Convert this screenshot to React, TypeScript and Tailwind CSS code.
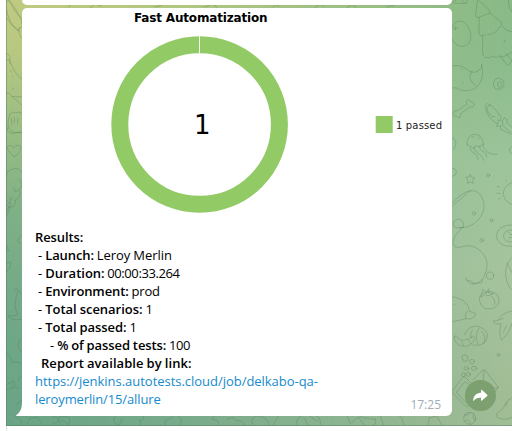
import React from "react";

const lines: { indent: string; label: string; value?: string; labelClass?: string; valueClass?: string }[] = [
  { indent: "", label: "Results:", labelClass: "tracking-[-0.12px]" },
  { indent: " - ", label: "Launch:", value: "Leroy Merlin", labelClass: "tracking-[-0.1px]", valueClass: "tracking-[-0.05px]" },
  { indent: " - ", label: "Duration:", value: "00:00:33.264", valueClass: "tracking-[-0.4px]" },
  { indent: " - ", label: "Environment:", value: "prod", labelClass: "tracking-[-0.1px]", valueClass: "tracking-[-0.2px]" },
  { indent: " - ", label: "Total scenarios:", value: "1", labelClass: "tracking-[-0.02px]" },
  { indent: " - ", label: "Total passed:", value: "1", labelClass: "tracking-[-0.06px]" },
  { indent: "     - ", label: "% of passed tests:", value: "100", labelClass: "tracking-[-0.09px]", valueClass: "tracking-[-0.4px]" },
  { indent: "  ", label: "Report available by link:", labelClass: "tracking-[0.06px]" },
];

function Wallpaper() {
  return (
    <svg className="absolute inset-0" width="506" height="426" viewBox="6 0 506 426" aria-hidden="true">
      <defs>
        <linearGradient id="left" x1="0" y1="0" x2="0" y2="1">
          <stop offset="0" stopColor="#c1cb80" />
          <stop offset="0.12" stopColor="#b9c981" />
          <stop offset="0.3" stopColor="#9abd84" />
          <stop offset="0.5" stopColor="#80b087" />
          <stop offset="0.75" stopColor="#70a888" />
          <stop offset="1" stopColor="#69a486" />
        </linearGradient>
        <linearGradient id="right" x1="0" y1="0" x2="0.08" y2="1">
          <stop offset="0" stopColor="#86b883" />
          <stop offset="0.22" stopColor="#8bbb8c" />
          <stop offset="0.45" stopColor="#9dc49b" />
          <stop offset="0.7" stopColor="#a6c49e" />
          <stop offset="1" stopColor="#a1bd96" />
        </linearGradient>
        <linearGradient id="fade" x1="0" y1="0" x2="1" y2="0">
          <stop offset="0" stopColor="#000" />
          <stop offset="0.35" stopColor="#444" />
          <stop offset="0.88" stopColor="#ddd" />
          <stop offset="1" stopColor="#fff" />
        </linearGradient>
        <mask id="blend"><rect x="6" width="506" height="426" fill="url(#fade)" /></mask>
      </defs>
      <rect x="6" width="506" height="426" fill="url(#left)" />
      <rect x="6" width="506" height="426" fill="url(#right)" mask="url(#blend)" />
      <g fill="none" stroke="#527f5a" strokeOpacity="0.36" strokeWidth="2.8" strokeLinecap="round" strokeLinejoin="round">
        <g transform="translate(440 0) scale(.33333)">
          <path d="M38 8 55-5 82-3 79 11 42 9M66 0l8 9M113-2 107 42q0 12 10 10l31-12q4-3 0-9L116 0M118 52l-1 41q-2 14 9 13l10-1m8-1c18-2 28-10 34-23 7-3 11-9 6-14L148 38" />
          <path d="M127 107c5 19-6 58 8 65q16 4 25-4 9 9 20-1 8 8 17 0l19-11M181 169l19 25q6 4 9-2l7-11M197 160l19 22M187 79q14 17 29 16M195 122q-6-2-2 4M206-2q-4 20 10 38" />
          <path d="M36 83c7-22 28-27 43-10 24 32 13 67-13 66-16-1-26-10-30-25M39 88l7-8v10l8-9" />
          <path d="M36 198c28-6 39 7 55 17 14 8 38-9 34-22 9 37-4 61-19 71-20 13-46 8-56 0q-8-3-14 1M96 213c-13 18-4 35 12 44M67 250l3-1M63 207l3 1" />
          <path d="M192 260q-10 12-24 7-13-11-5-25 9-12 22-4 12 10 3 20-9 8-15-1-2-10 7-12 8 3 4 9M53 331l28-18c-7-14 8-18 11-8 14 2 14 15 2 16l-4-1-29 22c4 10-5 15-11 7-13 1-15-14-5-16q4 0 8-2" />
          <path d="M178 344c-18-27-44-45-41-22 2 21 17 40 34 49l13-17q-2-7-6-10ZM152 316c-10-1-15 11-7 21l10 12 10 1M174 369l-5 11 13-4-1 11 31 15M181 361l8 4-1 12 28 23M189 361l4-8 9 6-2 9 16 14M172 360l3 1" />
          <path d="M82 434c-4-40 41-38 45-12q8 12-3 15-7 8-15-1l-10 10-7-8q-9 3-10-4M95 411h7M113 414h3M91 443c2 22 21 11 23 36M104 440c-4 21 18 16 28 41M118 439c4 22 21 10 22 31M129 431c0 23 23 35 43 32M36 413q22 8 5 35M216 440q-16 9-1 21" />
        </g>
        <g transform="translate(440 140) scale(.33333)">
          <path d="M36 86q21 0 9 20l-9 3M91 104l5 9 9 1-7 7 2 9-9-4-9 4 1-10-6-8 10-1ZM36 190c37-42 70-49 88-21 19 30 3 75-40 91l-26 4M36 198l55-46" />
          <circle cx="102" cy="220" r="5" /><circle cx="145" cy="106" r="4" /><circle cx="154" cy="241" r="4" /><circle cx="125" cy="301" r="5" /><circle cx="150" cy="407" r="11" />
          <path d="M70 262C48 267 35 260 41 246c12-19 38-2 27 17C20 305 40 330 67 320c37-14 91 27 69 79-6 24-21 32-37 31-5-13-24-3-21-16M216 128c-33 9-36 53 0 65M171 139l8 3M171 160h9M176 178l5-5M197 121l2 3M216 255c-63-2-61 68 0 64M216 270c-35-2-33 39 0 36M205 276l6 8 5-1M206 294l10-2M216 352c-29 29-22 70-3 96M201 370l15 28" />
        </g>
        <g transform="translate(440 280) scale(.33333)">
          <path d="M80 0c11 18 31 12 35 9q16 2 11-10M138 38c-27-1-25 34-3 48 39 6 52-24 34-43q-13-14-31-5ZM129 29l10 7 8-10-1 13 14 2-13 6-13-3-12 8 4-14ZM155 49q15 14 7 26" />
          <path d="M36 50c31 6 48 17 53 45q10 0 18 6-5 20-28 15Q59 121 36 125M83 94q-12 7-5 21M42 74h2M216 93c-18 3-35 14-43 29l-14 1q4 12 24 8-8 29 1 49 21-14 32-50M177 120l14-5M190 157l9-20" />
          <path d="M43 171c1 33 45 37 58 12q9-11-3-15-10 12-29 13-21-4-15-9-8-9-11-1ZM74 164c14-37 55-30 68-2 2 27-20 37-43 33M97 150c-9 13-4 23 0 25M117 144c-11 16-8 38-3 48M125 154q18 20 5 37M64 184l7 13M86 180l7 11" />
          <ellipse cx="75" cy="234" rx="8" ry="10" transform="rotate(-30 75 234)" /><circle cx="96" cy="245" r="7" /><ellipse cx="79" cy="265" rx="7" ry="5" /><ellipse cx="102" cy="265" rx="8" ry="6" /><circle cx="85" cy="283" r="6" /><circle cx="70" cy="284" r="6" /><circle cx="175" cy="225" r="4" />
          <path d="M36 335 65 295q5-9 13-1l38 38-28 44q-6 8-14 0ZM50 336l22-28q4-4 8 0l27 26-23 32q-3 5-8 0ZM99 300l28-29q4-4 8-1l40 52-40 51q-5 5-10 0l-16-20M132 272l-3 37M175 322l-40 9" />
          <circle cx="89" cy="415" r="18" /><path d="M74 405q14 2 17-8M74 424q14-11 16 8M101 401q-6 13 5 22M216 354q-14 3-20 18-3 15-18 22-14 9-5 20 25 8 43-2M201 379q-9-9 1-11" />
        </g>
        <g transform="scale(.33333)">
          <path d="M19 5c12-13 26 22 43 49l6 25q-12 2-12 14-30-22-37-66M27 0q20 43 40 57M20 54q12 23 34 37M58 83q-6 20 9 34M19 163q12-6 11 20 13 39 36 55M20 180q10-8 9 11M31 211l3 5M37 227l2 1M19 280q10-4 15 8l32 27M36 290h30M38 264l2 5" />
          <path d="M29 344q7-12 17-5 9-5 19 0M29 344q-12 38 4 48 10 10 33 4M23 382q-5 20 19 18 15-8 24 0M34 356l2 18M44 353l-1 14M53 354v18M43 470C24 457 18 444 26 437q8-4 15 6 12-13 22-2 3 13-20 29ZM19 528q0-18 24-22 18-1 23 11M57 537q19 16 0 32 9 21-11 31 4 22-20 22M42 565l4 10 9-4M29 589l3 10 7-7M19 614q10 3 5 14l-5 9" />
        </g>
        <g transform="translate(0 200) scale(.33333)">
          <path d="M20 0q15 18 8 32l-8 17M30 0l2 12M19 138q9-3 3 7 10 9-3 7M19 192q5-10 12-5 4 17-12 28M65 104q-23 22-5 25M42 272q2-9 13-2l11 13M54 275q-17 39-1 68-12 9-30 3 8 17 42 12M66 412q-24 24 0 47M19 458q12 5 17 30 12-5 28 1M19 553l22-9 4 13-26 14M35 568q8-9 20-3M66 527q-14 7-10 18M48 615q9-15 18-11M42 646l24 19-1 25M75 690l13-35 24-4 16 24" />
        </g>
        <g transform="translate(0 410) scale(.33333)">
          <path d="M159 20q14-2 15 12-5 12-16 6M180 20h26q9 10 0 24-14 13-26-2-8-14 0-22M184 31l20 10M345 20q-9 12 2 21 15 10 19-15M420 46q5-10-2-15 15 3 12-13M497 47q-9-20 15-20 9-19 24-9 14 14 4 27M655 45q3-19-18-15 0-13 14-15M682 28q17-12 26 3 22-1 27 17M760 46q-13-19 8-28 31-3 40 28M834 19l-15 27M888 48q-2-36 42-36 39 5 30 36M912 22l14 28M926 16l26 18M1042 19l9 22 24-20 18 25M1080 20q29 9 47 7 4 12-9 22M1150 44l-8-25M1210 44q0-22-15-28M1284 48l4-24 22-6 15 26" />
        </g>
        <path d="M69 7q3-6 6-3M90 8l5-4 6 2M155 7l7-2M205 7l7-3 5 3M273 7q3-4 6-1M315 8q4-6 9-2M347 8l5-4 4 3M387 7l8-2" strokeWidth="1" />
      </g>
      <path d="M6.5 0v426M6 425.5h506" fill="none" stroke="#557d60" strokeOpacity="0.5" />
    </svg>
  );
}

function Chart() {
  return (
    <svg className="block" width="430" height="219" viewBox="22 8 430 219" role="img" aria-label="Test results">
      <text x="134" y="21.5" textLength="133.5" fontFamily="DejaVu Sans, sans-serif" fontWeight="700" fontSize="12">Fast Automatization</text>
      <circle cx="199.6" cy="124.5" r="79.8" fill="none" stroke="#92ca66" strokeWidth="17" />
      <path d="M199.5 35v18" stroke="#f8fff0" strokeWidth="1" />
      <text x="194" y="134" fontFamily="DejaVu Sans, sans-serif" fontSize="26">1</text>
      <rect x="375.7" y="116" width="17" height="17" fill="#92ca66" />
      <text x="396" y="129" textLength="46" fill="#222" fontFamily="DejaVu Sans, sans-serif" fontSize="10">1 passed</text>
    </svg>
  );
}

export default function App() {
  return (
    <div className="h-[431px] w-[512px] overflow-hidden bg-white pl-[6px] font-['Open_Sans',sans-serif]">
      <main className="relative h-[426px] w-[506px] overflow-hidden">
        <Wallpaper />
        <div className="relative flex h-full flex-col pl-4">
          <div className="h-[5px] w-[430px] shrink-0 rounded-b-[5px] bg-white" />
          <div className="mt-[3px] flex items-end">
            <article className="relative h-[408px] w-[430px] rounded-t-[5px] rounded-br-[6px] bg-white">
              <svg className="absolute bottom-0 -left-[6px]" width="6" height="12" viewBox="0 0 6 12" aria-hidden="true">
                <path d="M6 0v12H.5Q-.3 11.7.5 11 5.5 7.5 6 0Z" fill="#fff" />
              </svg>
              <Chart />
              <div className="pl-[13px] pt-[1px] text-[13px] leading-[18px] [word-spacing:-0.38px] text-black">
                {lines.map((line) => (
                  <p key={line.label} className="whitespace-pre">
                    {line.indent}
                    <span className={`font-semibold ${line.labelClass ?? ""}`}>{line.label}</span>
                    {line.value && <span className={line.valueClass}>{` ${line.value}`}</span>}
                  </p>
                ))}
                <div className="flex items-end justify-between pr-[11px]">
                  <a className="text-[#168acd]">
                    <span className="tracking-[-0.03px]">https://jenkins.autotests.cloud/job/delkabo-qa-</span>
                    <br />
                    <span className="tracking-[-0.12px]">leroymerlin/15/allure</span>
                  </a>
                  <time className="-mb-[6px] text-[12px] leading-[18px] text-[#a0acb6]">17:25</time>
                </div>
              </div>
            </article>
            <button aria-label="Share" className="mb-[5px] ml-[13px] flex size-[31px] items-center justify-center rounded-full bg-[#7da071]">
              <svg width="15" height="13" viewBox="0 0 15 13" fill="white" aria-hidden="true">
                <path d="M8 1.4Q8 .2 9 1l5.2 4.7q.7.6 0 1.2L9 11.5q-1 .7-1-.6V8.7C4.7 8.4 2.6 9.3.7 11.7q-.5.5-.5-.3C.5 7 3.2 4 8 3.8Z" />
              </svg>
            </button>
          </div>
        </div>
      </main>
      <div className="h-[5px] border-l border-[#dfe1e2]" />
    </div>
  );
}
